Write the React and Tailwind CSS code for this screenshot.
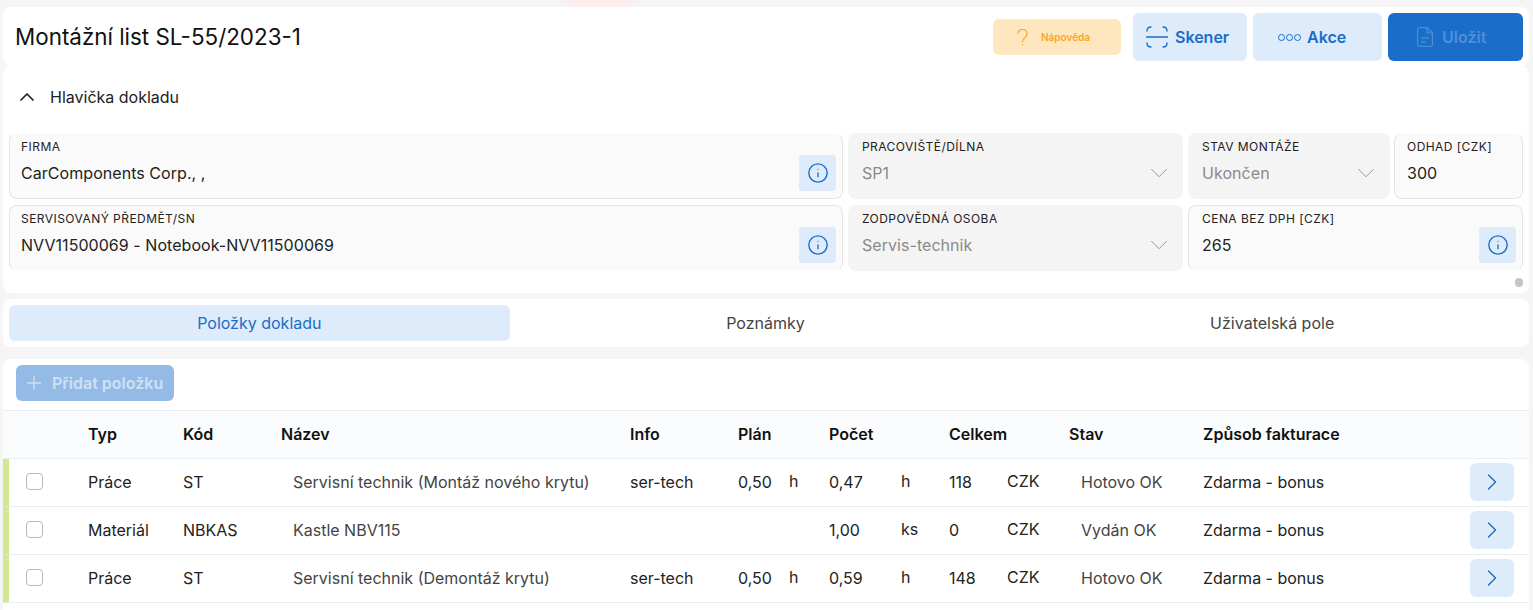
import React from 'react';
import { ChevronUp, ChevronDown, ChevronRight, Info, Plus } from 'lucide-react';

const rows = [
    { typ: 'Práce', kod: 'ST', nazev: 'Servisní technik (Montáž nového krytu)', info: 'ser-tech', plan: '0,50', planJ: 'h', pocet: '0,47', j: 'h', celkem: '118', stav: 'Hotovo OK' },
    { typ: 'Materiál', kod: 'NBKAS', nazev: 'Kastle NBV115', info: '', plan: '', planJ: '', pocet: '1,00', j: 'ks', celkem: '0', stav: 'Vydán OK' },
    { typ: 'Práce', kod: 'ST', nazev: 'Servisní technik (Demontáž krytu)', info: 'ser-tech', plan: '0,50', planJ: 'h', pocet: '0,59', j: 'h', celkem: '148', stav: 'Hotovo OK' },
];

const gridCols = 'grid grid-cols-[79px_95px_98px_349px_108px_91px_120px_120px_134px_1fr] items-center';

const InfoButton = () => (
    <div className="flex h-9 w-[37px] shrink-0 items-center justify-center rounded bg-[#deebfb] text-[#1a6dc8]">
        <Info size={22} strokeWidth={1.5} />
    </div>
);

const Field = ({ label, value, className, disabled, select, info, lower }) => (
    <div className={`flex h-[66px] shrink-0 items-center rounded-lg ${disabled ? 'bg-[#f4f4f4]' : `border border-[#e4e4e4] bg-[#fafafa] ${lower ? 'border-b-transparent' : 'border-t-transparent'}`} ${className}`}>
        <div className={`min-w-0 flex-1 self-start ${disabled ? 'pt-1.5' : 'pt-[5px]'}`}>
            <div className="text-[12px] leading-[15px] tracking-[0.45px] text-[#222]">{label}</div>
            <div className={`mt-2 whitespace-nowrap text-[16px] leading-[22px] tracking-[0.05px] ${disabled ? 'text-[#8a8a8a]' : 'text-[#222]'}`}>{value}</div>
        </div>
        {select && <ChevronDown size={30} strokeWidth={0.8} className="mr-[9px] mt-[14px] text-[#9a9a9a]" />}
        {info && <div className="mr-1.5 mt-[14px]"><InfoButton /></div>}
    </div>
);

export default function App() {
    return (
        <div className="relative h-[610px] overflow-hidden bg-[#f5f5f5] pl-[3px] pr-1 pt-[7px] font-['Inter',sans-serif]">
            <div className="absolute left-[565px] top-[-6px] h-3 w-[70px] rounded-full bg-[#fdeaea] blur-xs"></div>

            <div className="relative flex h-[59px] items-center rounded-lg bg-white pb-0 pl-3 pr-1.5 pt-px">
                <h1 className="flex-1 text-[22.4px] font-normal text-[#111]">Montážní list SL-55/2023-1</h1>
                <button className="flex h-9 w-[128px] items-center gap-[13px] rounded-md bg-[#fee6bf] pl-[24px] text-[10px] font-semibold text-[#f9a825]">
                    <svg width="11" height="17" viewBox="0 0 11 17" fill="none" stroke="currentColor" strokeWidth="1.2">
                        <path d="M1 5 A4.5 4.5 0 1 1 8 8.5 C6 10 5.5 11 5.5 13" />
                        <path d="M5.5 15 V16.2" />
                    </svg>
                    Nápověda
                </button>
                <button className="ml-3 flex h-12 w-[114px] items-center gap-[7px] rounded-md bg-[#deebfb] pl-[13px] text-[16px] font-semibold text-[#1a6dc8]">
                    <svg width="22" height="22" viewBox="0 0 22 22" fill="none" stroke="currentColor" strokeWidth="1.4" strokeLinecap="round">
                        <path d="M1 5 Q1 1 5 1" />
                        <path d="M17 1 Q21 1 21 5" />
                        <path d="M1 17 Q1 21 5 21" />
                        <path d="M21 17 Q21 21 17 21" />
                        <path d="M0.5 11 H21.5" />
                    </svg>
                    Skener
                </button>
                <button className="ml-1.5 flex h-12 w-[129px] items-center gap-1.5 rounded-md bg-[#deebfb] pl-[25px] text-[16px] font-semibold text-[#1a6dc8]">
                    <span className="flex gap-px">
                        <span className="h-[7px] w-[7px] rounded-full border-[1.5px] border-[#1a6dc8]"></span>
                        <span className="h-[7px] w-[7px] rounded-full border-[1.5px] border-[#1a6dc8]"></span>
                        <span className="h-[7px] w-[7px] rounded-full border-[1.5px] border-[#1a6dc8]"></span>
                    </span>
                    Akce
                </button>
                <button className="ml-1.5 flex h-12 w-[135px] items-center gap-[9px] rounded-md bg-[#1a6dc8] pl-[29px] text-[16px] font-semibold text-[#4f8fd8]">
                    <svg width="16" height="20" viewBox="0 0 16 20" fill="none" stroke="currentColor" strokeWidth="1.2">
                        <path d="M0.6 2.5 A2 2 0 0 1 2.5 0.6 H10 L15.4 6 V17.5 A2 2 0 0 1 13.5 19.4 H2.5 A2 2 0 0 1 0.6 17.5 Z" />
                        <path d="M10 0.6 V6 H15.4" />
                        <path d="M4 11 H12" />
                        <path d="M4 15 H9" />
                    </svg>
                    Uložit
                </button>
            </div>

            <div className="relative h-[227px] rounded-lg bg-white px-1.5">
                <div className="flex h-[67px] items-center gap-[11px] pb-[5px] pl-1.5 text-[16px] text-[#222]">
                    <ChevronUp size={24} strokeWidth={1.75} />
                    Hlavička dokladu
                </div>
                <div className="flex gap-[5px]">
                    <Field className="w-[834px] pl-[11px]" label="FIRMA" value="CarComponents Corp., ," info />
                    <Field className="w-[335px] pl-3.5" label="PRACOVIŠTĚ/DÍLNA" value="SP1" disabled select />
                    <Field className="w-[202px] pl-3.5" label="STAV MONTÁŽE" value="Ukončen" disabled select />
                    <Field className="ml-[-1px] w-[129px] pl-3" label="ODHAD [CZK]" value="300" />
                </div>
                <div className="mt-1.5 flex gap-[5px]">
                    <Field className="w-[834px] pl-[11px]" label="SERVISOVANÝ PŘEDMĚT/SN" value="NVV11500069 - Notebook-NVV11500069" info lower />
                    <Field className="w-[335px] pl-3.5" label="ZODPOVĚDNÁ OSOBA" value="Servis-technik" disabled select />
                    <Field className="w-[335px] pl-[13px]" label="CENA BEZ DPH [CZK]" value="265" info lower />
                </div>
                <div className="absolute bottom-1.5 right-1.5 h-[9px] w-2 rounded-full bg-[#c4c4c4]"></div>
            </div>

            <div className="mt-1.5 flex h-12 rounded-lg bg-white px-1.5 pt-1.5 text-[16px]">
                <div className="flex h-9 w-[501px] items-center justify-center rounded-md bg-[#deebfb] text-[#1a6dc8]">Položky dokladu</div>
                <div className="flex h-9 w-[512px] items-center justify-center text-[#444]">Poznámky</div>
                <div className="flex h-9 w-[502px] items-center justify-center text-[#444]">Uživatelská pole</div>
            </div>

            <div className="mt-3 h-[260px] rounded-t-lg bg-white">
                <div className="h-[51px] pl-[13px] pt-1.5">
                    <button className="flex h-9 w-[158px] items-center gap-[7px] rounded-md bg-[#94bae6] pl-[7px] text-[16px] font-semibold text-[#cfe0f4]">
                        <Plus size={22} strokeWidth={1.5} />
                        Přidat položku
                    </button>
                </div>
                <div className={`${gridCols} h-[49px] border-y border-[#e9eef3] bg-[#fafcfe] pb-px pl-[6px] text-[16px] font-semibold text-[#111]`}>
                    <span></span>
                    <span>Typ</span>
                    <span>Kód</span>
                    <span>Název</span>
                    <span>Info</span>
                    <span>Plán</span>
                    <span>Počet</span>
                    <span>Celkem</span>
                    <span>Stav</span>
                    <span>Způsob fakturace</span>
                </div>
                {rows.map((r, i) => (
                    <div key={i} className={`${gridCols} h-12 border-b border-l-[6px] border-[#e9eef3] border-l-[#d2e78f] pb-0.5 text-[16px] text-[#222]`}>
                        <span className="pl-[17px]">
                            <span className="block h-[17px] w-[17px] rounded border border-[#b9b9b9] bg-white"></span>
                        </span>
                        <span>{r.typ}</span>
                        <span>{r.kod}</span>
                        <span className="pl-3 text-[#444]">{r.nazev}</span>
                        <span>{r.info}</span>
                        <span className="flex items-center">
                            <span className="w-[51px]">{r.plan}</span>
                            <span className="-mt-0.5">{r.planJ}</span>
                        </span>
                        <span className="flex items-center">
                            <span className="w-[72px]">{r.pocet}</span>
                            <span className="-mt-0.5">{r.j}</span>
                        </span>
                        <span className="flex items-center">
                            <span className="w-[58px]">{r.celkem}</span>
                            <span className="-mt-0.5">CZK</span>
                        </span>
                        <span className="pl-3 text-[#444]">{r.stav}</span>
                        <span className="flex items-center justify-between pr-[15px]">
                            Zdarma - bonus
                            <span className="flex h-[38px] w-11 items-center justify-center rounded-md bg-[#deebfb] text-[#1a6dc8]">
                                <ChevronRight size={28} strokeWidth={1.2} />
                            </span>
                        </span>
                    </div>
                ))}
            </div>
        </div>
    );
}
